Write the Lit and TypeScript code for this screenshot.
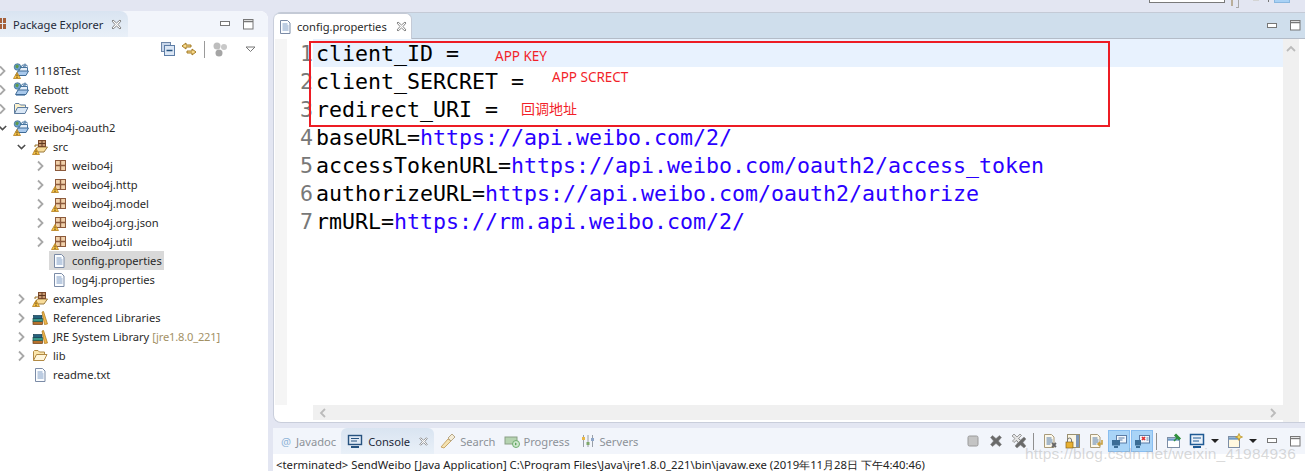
import { LitElement, html, css, svg } from "lit";
import { customElement } from "lit/decorators.js";

const warn = svg`<path d="M4 9.500l3.500 6h-7z" fill="#f7c646" stroke="#b57e1c" stroke-width=".8"/><rect x="3.500" y="11.500" width="1" height="2" fill="#5a3b10"/><rect x="3.500" y="14" width="1" height="1" fill="#5a3b10"/>`;
const s16 = (c: unknown) => html`<svg class="ic" viewBox="0 0 16 16" width="16" height="16">${c}</svg>`;

const projectIcon = (w: boolean) => s16(svg`
  <path d="M6 3.500h2.500l1-1.500h4l1 1.500" fill="#dbe8f6" stroke="#47749f"/>
  <path d="M6 4.500h8.500v4h-8.500z" fill="#e6eff9" stroke="#47749f"/>
  <path d="M2.500 12.500l2.500-4.500h10.500l-2.500 4.500z" fill="#a9c9ec" stroke="#3f6b96"/>
  <circle cx="4.500" cy="4" r="3.300" fill="#6aa0d0" stroke="#3a6a88" stroke-width=".7"/>
  <path d="M2.500 2.500l2-1 1.500 1.500-1.500 2.500-2-1z" fill="#5f9a4c"/>
  <path d="M12 .5v4l-2-1" fill="none" stroke="#47749f"/>
  ${w ? warn : svg`<path d="M3 13.500h9" stroke="#8aa8c8"/>`}`);
const folder = (stroke: string, back: string, front: string) => s16(svg`
  <path d="M1.500 12.500v-9l1-1h3.500l1.500 1.500h5v2" fill="${back}" stroke="${stroke}"/>
  <path d="M1.500 12.500l3-6h10.500l-3 6z" fill="${front}" stroke="${stroke}"/>`);
const serversIcon = folder("#5f7d9f", "#fdf2cc", "#d9e7f6");
const libFolder = folder("#b28a44", "#fbe6ab", "#fff6dc");
const srcIcon = s16(svg`
  <path d="M2 13l3.500-5h10l-3.500 5z" fill="#f8dc9a" stroke="#9a7a3f"/>
  <path d="M3 8v-2h3" fill="#f8dc9a" stroke="#9a7a3f"/>
  <rect x="6.500" y="1.500" width="7" height="6" fill="#c89a72" stroke="#7d4a2d"/><path d="M10 1.500v6M6.500 4.500h7" stroke="#5f3820" stroke-width="1"/>
  ${warn}`);
const pkg = (w: boolean) => s16(svg`
  <rect x="4.500" y="2.500" width="10" height="10" fill="#f0d0aa" stroke="#8c5a3c"/>
  <path d="M9.500 2.500v10M4.500 7.500h10" stroke="#8c5a3c" stroke-width="1.400"/>
  ${w ? warn : ""}`);
const file = s16(svg`
  <path d="M3.500 1.500h7l2.500 2.500v10.500h-9.500z" fill="#fbfdff" stroke="#7b8ba6"/>
  <path d="M5.500 5h5M5.500 7h6M5.500 9h6M5.500 11h6" stroke="#7f9cc4"/>`);
const lib = s16(svg`
  <rect x="1" y="11.500" width="9.500" height="3" fill="#b6702c" stroke="#6c3d14" stroke-width=".7"/>
  <rect x="1" y="8.500" width="9.500" height="3" fill="#3a9a8a" stroke="#1f5a50" stroke-width=".7"/>
  <rect x="1.500" y="5.500" width="8.500" height="3" fill="#26637e" stroke="#163e52" stroke-width=".7"/>
  <path d="M10 2l1.500-.5 4 12.500-3 .5z" fill="#f2b84a" stroke="#a87418" stroke-width=".7"/>`);

const Chev = html`<svg class="tw" viewBox="0 0 9 12" width="9" height="12"><path d="M2 1.500l4.500 4.500-4.500 4.500" fill="none" stroke="#a8a8a8" stroke-width="1.800"/></svg>`;
const ChevOpen = html`<svg class="tw" viewBox="0 0 11 12" width="9" height="12"><path d="M1 3.500l4.500 4.500 4.500-4.500" fill="none" stroke="#4d4d4d" stroke-width="1.900"/></svg>`;
const Close = html`<svg class="x" viewBox="0 0 11 11" width="11" height="11"><path d="M1 2l1-1 3.500 3 3.500-3 1 1-3 3.500 3 3.500-1 1-3.500-3-3.500 3-1-1 3-3.500z" fill="#fff" stroke="#7a7a7a" stroke-width=".9"/></svg>`;
const MinBtn = html`<svg class="ic" viewBox="0 0 11 6" width="11" height="6"><rect x=".5" y=".5" width="9" height="4" fill="#fff" stroke="#777"/></svg>`;
const MaxBtn = html`<svg class="ic" viewBox="0 0 11 11" width="11" height="11"><rect x=".5" y=".5" width="9.500" height="9.500" fill="#fff" stroke="#777"/><path d="M1 2.500h9" stroke="#777" stroke-width="1.400"/></svg>`;
const PkgGlyph = html`<svg class="ic" viewBox="0 0 6 12" width="6" height="12"><path d="M0 0h2v5h-2zM3 0h3v5h-3zM0 6h2v5h-2zM3 6h3v5h-3z" fill="#a5603a"/></svg>`;

type Row = { d: number; tw?: "c" | "o"; ic: unknown; t: string; dec?: string; sel?: boolean };
const rows: Row[] = [
  { d: 0, tw: "c", ic: projectIcon(true), t: "1118Test" },
  { d: 0, tw: "c", ic: projectIcon(false), t: "Rebott" },
  { d: 0, tw: "c", ic: serversIcon, t: "Servers" },
  { d: 0, tw: "o", ic: projectIcon(true), t: "weibo4j-oauth2" },
  { d: 1, tw: "o", ic: srcIcon, t: "src" },
  { d: 2, tw: "c", ic: pkg(false), t: "weibo4j" },
  { d: 2, tw: "c", ic: pkg(true), t: "weibo4j.http" },
  { d: 2, tw: "c", ic: pkg(true), t: "weibo4j.model" },
  { d: 2, tw: "c", ic: pkg(true), t: "weibo4j.org.json" },
  { d: 2, tw: "c", ic: pkg(true), t: "weibo4j.util" },
  { d: 2, ic: file, t: "config.properties", sel: true },
  { d: 2, ic: file, t: "log4j.properties" },
  { d: 1, tw: "c", ic: srcIcon, t: "examples" },
  { d: 1, tw: "c", ic: lib, t: "Referenced Libraries" },
  { d: 1, tw: "c", ic: lib, t: "JRE System Library", dec: "[jre1.8.0_221]" },
  { d: 1, tw: "c", ic: libFolder, t: "lib" },
  { d: 1, ic: file, t: "readme.txt" },
];

const code: [string, string][] = [
  ["client_ID = ", ""],
  ["client_SERCRET = ", ""],
  ["redirect_URI = ", ""],
  ["baseURL=", "https://api.weibo.com/2/"],
  ["accessTokenURL=", "https://api.weibo.com/oauth2/access_token"],
  ["authorizeURL=", "https://api.weibo.com/oauth2/authorize"],
  ["rmURL=", "https://rm.api.weibo.com/2/"],
];

const bigX = svg`<path d="M2.500 4.500l2-2 3.500 3 3.500-3 2 2-3 3.500 3 3.500-2 2-3.500-3-3.500 3-2-2 3-3.500z" fill="#6a6a6a" stroke="#8a8a8a" stroke-width=".5"/>`;
const grayX = svg`<path d="M1 3l2-2 3 3 3-3 1.500 1.500-3 3 2 2-2 2-2-2-2.500 2-1.500-1.500 2.500-2.500z" fill="#e4e4e4" stroke="#7a7a7a" stroke-width=".7"/>`;
const docLines = svg`<path d="M2.500 1.500h7l2.500 2.500v10.500h-9.500z" fill="#fdf8ea" stroke="#a89a7a"/><path d="M4.500 5h5M4.500 7h6M4.500 9h6M4.500 11h4" stroke="#4f78aa"/>`;
const monitor = svg`<rect x="5.500" y="2.500" width="10" height="7.500" fill="#f2f7fc" stroke="#5d7da6"/><path d="M7.500 5h6M7.500 7h4" stroke="#5d7da6"/><rect x="1" y="7" width="8" height="5.500" fill="#3b6d96"/><path d="M3 14h4" stroke="#3b6d96" stroke-width="2"/>`;

@customElement("app-root")
export class AppRoot extends LitElement {
  static styles = css`
    :host { display: block; width: 1305px; height: 471px; overflow: hidden; background: #e3e6f2; font-family: "Noto Sans", sans-serif; font-size: 11.150px; color: #2a2a2a; }
    .ic { display: block; flex: none; }
    .root { display: grid; grid-template-columns: 268px 1fr; column-gap: 5px; height: 471px; }
    .col { display: flex; flex-direction: column; min-width: 0; }
    .pe { margin-top: 11px; height: 460px; background: #fff; border-radius: 0 8px 0 0; display: flex; flex-direction: column; overflow: hidden; }
    .pe-head { height: 26px; flex: none; display: flex; align-items: stretch; background: #f2f5fb; border-radius: 0 8px 0 0; }
    .pe-tab { width: 128px; background: linear-gradient(#d9e4f1, #e9f0f8); border-radius: 0 8px 0 0; display: flex; align-items: center; box-sizing: border-box; overflow: hidden; }
    .pe-tab .t { color: #1f2a3a; margin: 0 8px 0 7px; }
    .winbtns { margin-left: auto; display: flex; align-items: center; gap: 12px; padding-right: 14px; }
    .pe-tools { height: 24px; flex: none; display: flex; align-items: center; justify-content: flex-end; gap: 5px; padding-right: 10px; }
    .tree { display: flex; flex-direction: column; margin-left: -2px; }
    .row { height: 19px; display: flex; align-items: center; white-space: nowrap; }
    .tw-slot { width: 9px; height: 12px; flex: none; margin-right: 4px; }
    .cell { display: flex; align-items: center; height: 19px; padding-left: 2px; }
    .cell .ic { margin-right: 3px; }
    .cell .t { padding: 0 2px; }
    .row.sel .cell { background: #d9d9d9; }
    .dec { color: #a39166; letter-spacing: -0.200px; }
    .tbar-sep { width: 1px; height: 17px; background: #9a9a9a; margin: 0 2px; }

    .top { height: 12px; flex: none; display: flex; align-items: flex-start; }
    .top .box { margin-left: 876px; width: 74px; height: 2px; background: #fff; border: solid #7a7a7a; border-width: 0 1px 1px; }
    .top .m1 { margin-left: 6px; width: 2px; height: 6px; background: #b9ae9a; }
    .top .m2 { margin-left: 3px; width: 2px; height: 7px; border: solid #a8a8a8; border-width: 0 1px 1px 0; }
    .top .m3 { margin-left: 14px; width: 6px; height: 1px; background: #d4d4d4; }
    .top .m4 { margin-left: 9px; width: 1px; height: 2px; background: #777; }
    .top .bl { margin-left: 5px; width: 14px; height: 2px; background: #a8d1f5; border: 1px solid #8ab8e0; border-top: 0; }
    .ed { height: 411px; flex: none; box-sizing: border-box; background: #fff; border-radius: 8px 0 0 8px; border: solid #c9cedb; border-width: 0 0 1px 1px; display: flex; flex-direction: column; overflow: hidden; }
    .ed-head { height: 25px; flex: none; background: #cfdeec; border-bottom: 1px solid #b4bcc8; display: flex; border-top: 1px solid #c4cad6; margin-left: -1px; }
    .ed-tab { width: 139px; height: 26px; margin-bottom: -1px; background: #fff; border-radius: 6px 6px 0 0; display: flex; align-items: center; gap: 4px; box-sizing: border-box; padding-left: 3px; border: 1px solid #c4cad6; border-bottom: 0; }
    .ed-tab .x { margin-left: 5px; }
    .ed-head .winbtns { padding-right: 4px; }
    .ed-body { flex: 1; min-height: 0; display: grid; grid-template-columns: 1fr 16px; padding: 0 6px 0 1px; }
    .main { display: flex; flex-direction: column; min-width: 0; }
    .lines { flex: 1; min-height: 0; display: grid; grid-template-columns: 12px 1fr; position: relative; background: #fff; }
    .gutter { background: #f5f5f5; }
    .code { font-family: "DejaVu Sans Mono", monospace; font-size: 21.600px; color: #000; }
    .ln { display: grid; grid-template-columns: 26px 1fr; height: 28px; line-height: 30px; white-space: pre; }
    .num { color: #787878; text-align: right; }
    .txt { padding-left: 3px; height: 28px; }
    .ln.cur .txt { background: #e8f2fe; }
    .url { color: #2a00ff; }
    .sc-v { background: #f0f0f0; display: flex; justify-content: center; padding-top: 6px; }
    .sc-h { height: 15px; background: #f0f0f0; display: flex; align-items: center; justify-content: space-between; padding: 0 6px; flex: none; margin: 0 0 2px 38px; }

    .redbox { position: absolute; left: 34px; top: 2px; width: 797px; height: 82px; border: 2px solid #ed1c24; pointer-events: none; }
    .note { position: absolute; color: #f21f2a; font-size: 13.500px; line-height: 18px; white-space: nowrap; }
    .note.cjk { font-family: "Noto Sans CJK SC", sans-serif; font-size: 14px; }

    .bot { margin-top: 5px; flex: 1; min-height: 0; background: #fff; display: flex; flex-direction: column; position: relative; }
    .bot-head { height: 26px; display: flex; align-items: center; background: #f2f5fb; flex: none; padding-left: 2px; }
    .vtab { display: flex; align-items: center; gap: 3px; color: #8d9298; padding: 0 6px; height: 26px; }
    .vtab.at { gap: 5px; padding-left: 6px; }
    .vtab.on { background: linear-gradient(#d9e4f1, #e9f0f8); border-radius: 6px 6px 0 0; color: #1f2a3a; width: 93px; padding-left: 6px; box-sizing: border-box; gap: 5px; margin: 0 0 0 -1px; }
    .vtab.on .x { margin-left: 4px; }
    .vtab.search { gap: 4px; padding-right: 3px; }
    .vtab.progress { padding-right: 5px; }
    .tools { margin-left: auto; display: flex; align-items: center; gap: 1px; padding-right: 4px; }
    .tb { width: 22px; height: 22px; display: flex; align-items: center; justify-content: center; box-sizing: border-box; }
    .tb.on { background: #a9d4f7; border: 1px solid #88bdf0; }
    .sep { width: 1px; height: 17px; background: #8f8f8f; margin: 0 4px 0 2px; }
    .sep.b { margin-right: 5px; }
    .caret { width: 0; height: 0; border: solid transparent; border-width: 4px 4px 0; border-top-color: #222; margin: 0 4px 0 2px; }
    .gap4 { width: 4px; }
    .gap10 { width: 10px; }
    .console { font-size: 11.320px; line-height: 13px; color: #222; padding: 4px 0 0 3px; white-space: nowrap; }
    .wm { position: absolute; right: 9px; top: 17px; font: 15.500px "Liberation Sans", sans-serif; letter-spacing: 0.200px; color: rgba(165,165,165,.42); white-space: nowrap; pointer-events: none; }
  `;

  render() {
    return html`<div class="root">
      <div class="pe">
        <div class="pe-head">
          <div class="pe-tab">${PkgGlyph}<span class="t">Package Explorer</span>${Close}</div>
          <div class="winbtns">${MinBtn}${MaxBtn}</div>
        </div>
        <div class="pe-tools">
          ${s16(svg`<rect x="1.500" y="1.500" width="9" height="9" fill="#c9d7ea" stroke="#6d86a8"/><rect x="4.500" y="4.500" width="10" height="10" fill="#dce7f5" stroke="#5d7da6"/><path d="M6.500 9.500h6" stroke="#24527f" stroke-width="1.400"/>`)}
          ${s16(svg`<path d="M1 5l4-3v2h5v2h-5v2zM15 11l-4-3v2h-5v2h5v2z" fill="#f8d98a" stroke="#a37a24"/>`)}
          <span class="tbar-sep"></span>
          ${s16(svg`<circle cx="5" cy="5" r="3.500" fill="#bdbdbd"/><circle cx="12" cy="6" r="3" fill="#c8c8c8"/><circle cx="7" cy="12" r="3.500" fill="#a5a5a5"/>`)}
          <svg viewBox="0 0 11 7" width="11" height="7" style="margin-left:12px;margin-right:2px"><path d="M1 1h9l-4.500 4.500z" fill="#fff" stroke="#777"/></svg>
        </div>
        <div class="tree">
          ${rows.map((r) => html`<div class="row ${r.sel ? "sel" : ""}" style="padding-left:${r.d * 19}px">
            <span class="tw-slot">${r.tw === "c" ? Chev : r.tw === "o" ? ChevOpen : ""}</span>
            <span class="cell">${r.ic}<span class="t">${r.t}${r.dec ? html` <span class="dec">${r.dec}</span>` : ""}</span></span>
          </div>`)}
        </div>
      </div>
      <div class="col">
        <div class="top"><span class="box"></span><span class="m1"></span><span class="m2"></span><span class="m3"></span><span class="m4"></span><span class="bl"></span></div>
        <div class="ed">
          <div class="ed-head">
            <div class="ed-tab">${file}<span class="t">config.properties</span>${Close}</div>
            <div class="winbtns">${MinBtn}${MaxBtn}</div>
          </div>
          <div class="ed-body">
            <div class="main">
              <div class="lines">
                <div class="gutter"></div>
                <div class="code">
                  ${code.map((c, i) => html`<div class="ln ${i === 0 ? "cur" : ""}"><span class="num">${i + 1}</span><span class="txt">${c[0]}<span class="url">${c[1]}</span></span></div>`)}
                </div>
                <div class="redbox"></div>
                <span class="note" style="left:220px;top:8px">APP KEY</span>
                <span class="note" style="left:277px;top:29px">APP SCRECT</span>
                <span class="note cjk" style="left:246px;top:60px">回调地址</span>
              </div>
              <div class="sc-h">
                <svg viewBox="0 0 8 10" width="8" height="10"><path d="M6 1l-4 4 4 4" fill="none" stroke="#bbb" stroke-width="1.800"/></svg>
                <svg viewBox="0 0 8 10" width="8" height="10"><path d="M2 1l4 4-4 4" fill="none" stroke="#bbb" stroke-width="1.800"/></svg>
              </div>
            </div>
            <div class="sc-v"><svg viewBox="0 0 10 8" width="10" height="8"><path d="M1 6l4-4 4 4" fill="none" stroke="#bbb" stroke-width="1.800"/></svg></div>
          </div>
        </div>
        <div class="bot">
          <div class="bot-head">
            <div class="vtab at"><span style="color:#8fb4d8">@</span><span>Javadoc</span></div>
            <div class="vtab on">${s16(svg`<rect x="1.500" y="2.500" width="13" height="9" fill="#dfe9f5" stroke="#26527f" stroke-width="1.400"/><path d="M4 5.500h8M4 8h6" stroke="#26527f"/><path d="M4 14h8" stroke="#26527f" stroke-width="2"/>`)}<span>Console</span>${Close}</div>
            <div class="vtab search">${s16(svg`<path d="M1 14l7-8 3 2-7 7z" fill="#f4e2b0" stroke="#c9a66a"/><path d="M8 5l4-4 3 3-4 4z" fill="#f4ecd8" stroke="#b8a888"/>`)}<span>Search</span></div>
            <div class="vtab progress">${s16(svg`<rect x="1" y="4" width="12" height="7" fill="#b5d3b0" stroke="#8aa086"/><circle cx="12" cy="11" r="3.500" fill="#cfe8cf" stroke="#6fae6f"/><path d="M11 9.500l2 1.500-2 1.500z" fill="#5aa05a"/>`)}<span>Progress</span></div>
            <div class="vtab">${s16(svg`<path d="M3.500 2v12M8 2v12M12.500 2v12" stroke="#9aa0a8"/><rect x="2" y="4" width="3" height="3" fill="#e8b84a"/><rect x="6.500" y="9" width="3" height="3" fill="#7fa86a"/><rect x="11" y="5" width="3" height="3" fill="#8fa6c8"/>`)}<span>Servers</span></div>
            <div class="tools">
              <span class="tb">${s16(svg`<rect x="3" y="3" width="10" height="10" rx="1.500" fill="#c4c4c4" stroke="#9a9a9a"/>`)}</span>
              <span class="tb">${s16(bigX)}</span>
              <span class="tb">${s16(svg`<g transform="translate(1.500 1.500)">${bigX}</g>${grayX}`)}</span>
              <span class="sep"></span>
              <span class="tb">${s16(svg`${docLines}<path d="M10 10l4 4M14 10l-4 4" stroke="#666" stroke-width="1.800"/>`)}</span>
              <span class="tb">${s16(svg`<rect x="2.500" y="1.500" width="12" height="13" fill="#fbf6e4" stroke="#9a9070"/><rect x="11" y="2" width="3" height="12" fill="#7d96b8"/><rect x="1" y="9" width="7" height="6" fill="#e8b030" stroke="#8a6416" stroke-width=".7"/><path d="M2.500 9v-2a2 2 0 0 1 4 0v2" fill="none" stroke="#777"/>`)}</span>
              <span class="tb">${s16(svg`${docLines}<path d="M14 7v4h-4M12 9l-2 2 2 2" fill="none" stroke="#c8a040" stroke-width="1.600"/>`)}</span>
              <span class="tb on">${s16(monitor)}</span>
              <span class="tb on">${s16(svg`<rect x="5.500" y="2.500" width="10" height="7.500" fill="#f2f7fc" stroke="#5d7da6"/><path d="M8 4l3 3M11 4l-3 3" stroke="#e03030" stroke-width="1.700"/><path d="M12.500 5h2M12.500 7h2" stroke="#5d7da6"/><rect x="1" y="7" width="6" height="5.500" fill="#3b6d96"/><path d="M2 14h4" stroke="#3b6d96" stroke-width="2"/>`)}</span>
              <span class="sep b"></span>
              <span class="tb">${s16(svg`<rect x="1.500" y="4.500" width="12" height="10" fill="#fff" stroke="#7d8ea6"/><path d="M2 6.500h11" stroke="#6d9ac8" stroke-width="2.400"/><path d="M8 8l4-4" stroke="#2f8f3c" stroke-width="1.500"/><path d="M9 1.500l5 5" stroke="#2f8f3c" stroke-width="3"/>`)}</span>
              <span class="tb">${s16(svg`<rect x="1.500" y="1.500" width="13" height="10" fill="#eaf1f9" stroke="#1f5a94" stroke-width="1.500"/><path d="M4 5h8M4 8h6" stroke="#1f5a94"/><path d="M4 14h8" stroke="#1f5a94" stroke-width="2"/>`)}</span>
              <span class="caret"></span>
              <span class="tb">${s16(svg`<rect x="1.500" y="3.500" width="11" height="11" fill="#fff8e0" stroke="#7d8ea6"/><path d="M2 5.500h10" stroke="#6d9ac8" stroke-width="2.400"/><path d="M12 .5l1 2.500 2.500 1-2.500 1-1 2.500-1-2.500-2.500-1 2.500-1z" fill="#f6d75c" stroke="#b58a20" stroke-width=".7"/>`)}</span>
              <span class="caret"></span>
              <span class="gap4"></span>
              ${MinBtn}<span class="gap10"></span>${MaxBtn}
            </div>
          </div>
          <div class="console">&lt;terminated&gt; SendWeibo [Java Application] C:\\Program Files\\Java\\jre1.8.0_221\\bin\\javaw.exe (2019年11月28日 下午4:40:46)</div>
          <div class="wm">https://blog.csdn.net/weixin_41984936</div>
        </div>
      </div>
    </div>`;
  }
}
